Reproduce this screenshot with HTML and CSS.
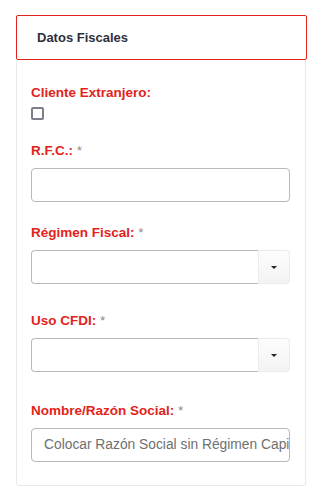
FILE: index.html
```html
<!DOCTYPE html>
<html lang="es">
<head>
<meta charset="utf-8">
<title>Datos Fiscales</title>
<link rel="stylesheet" href="styles.css">
</head>
<body>
<div class="panel">
  <div class="panel-title"><h5>Datos Fiscales</h5></div>
  <div class="panel-body">
    <div class="group g-check">
      <label class="lbl">Cliente Extranjero:</label>
      <span class="checkbox"></span>
    </div>
    <div class="group g-rfc">
      <label class="lbl">R.F.C.: <span class="req">*</span></label>
      <div class="input"></div>
    </div>
    <div class="group g-reg">
      <label class="lbl">Régimen Fiscal: <span class="req">*</span></label>
      <div class="select">
        <div class="select-field"></div>
        <div class="select-btn"><span class="caret"></span></div>
      </div>
    </div>
    <div class="group g-uso">
      <label class="lbl">Uso CFDI: <span class="req">*</span></label>
      <div class="select">
        <div class="select-field"></div>
        <div class="select-btn"><span class="caret"></span></div>
      </div>
    </div>
    <div class="group g-nom">
      <label class="lbl">Nombre/Razón Social: <span class="req">*</span></label>
      <div class="input placeholder">Colocar Razón Social sin Régimen Capital</div>
    </div>
  </div>
</div>
</body>
</html>
```

FILE: styles.css
```css
html, body {
  margin: 0;
  padding: 0;
  background: #ffffff;
}
body {
  padding: 15px 16px 0 16px;
  font-family: "Liberation Sans", Arial, sans-serif;
  font-size: 14px;
  line-height: 20px;
  color: #333;
}
.panel {
  width: 290px;
  box-sizing: border-box;
  border: 1px solid #e7eaec;
  border-radius: 0 0 3px 3px;
}
.panel-title {
  margin: -1px -2px 0 -1px;
  height: 45px;
  box-sizing: border-box;
  border: 1px solid #e2231a;
  border-radius: 2px;
  padding: 0 0 0 20px;
  display: flex;
  align-items: center;
  background: #fff;
}
.panel-title h5 {
  margin: 0;
  font-size: 13px;
  font-weight: bold;
  color: #2f2f3a;
}
.panel-body {
  padding: 23px 15px 23px 14px;
}
.group {
  display: flex;
  flex-direction: column;
  align-items: flex-start;
}
.lbl {
  font-weight: bold;
  color: #e2231a;
  font-size: 13.5px;
  line-height: 20px;
  margin-bottom: 7px;
}
.req {
  color: #8a8a8a;
  font-weight: normal;
}
.g-check .lbl { margin-bottom: 4px; }
.g-check { margin-bottom: 21px; }
.g-rfc { margin-bottom: 21px; }
.g-reg { margin-bottom: 27px; }
.g-uso { margin-bottom: 29px; }
.checkbox {
  width: 13px;
  height: 13px;
  box-sizing: border-box;
  border: 2px solid #7e7e8a;
  border-radius: 2px;
}
.input {
  width: 100%;
  height: 34px;
  box-sizing: border-box;
  border: 1px solid #b8b8b8;
  border-radius: 4px;
  padding: 6px 12px;
  font-size: 13.8px;
  line-height: 20px;
  white-space: nowrap;
  overflow: hidden;
}
.placeholder {
  color: #6f6f6f;
}
.select {
  width: 100%;
  height: 34px;
  display: flex;
}
.select-field {
  flex: 1;
  box-sizing: border-box;
  border: 1px solid #b8b8b8;
  border-right: none;
  border-radius: 4px 0 0 4px;
}
.select-btn {
  width: 32px;
  box-sizing: border-box;
  border: 1px solid #ebebeb;
  border-left: 1px solid #ececec;
  border-radius: 0 4px 4px 0;
  background: linear-gradient(#fdfdfd, #f3f3f3);
  display: flex;
  align-items: center;
  justify-content: center;
}
.caret {
  width: 0;
  height: 0;
  border-left: 3px solid transparent;
  border-right: 3px solid transparent;
  border-top: 3px solid #222;
}
```
